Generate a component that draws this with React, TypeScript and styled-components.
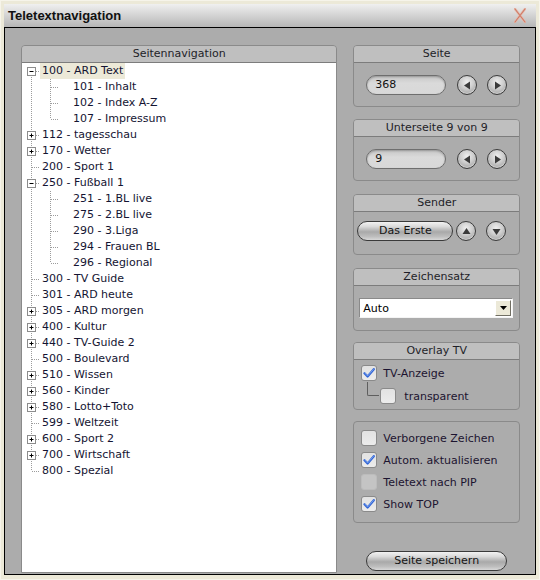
import React from "react";
import styled, { createGlobalStyle } from "styled-components";

type Child = { id: string; name: string };
type Node = { id: string; name: string; state: "open" | "closed" | "leaf"; selected?: boolean; children?: Child[] };

const tree: Node[] = [
  {
    id: "100",
    name: "ARD Text",
    state: "open",
    selected: true,
    children: [
      { id: "101", name: "Inhalt" },
      { id: "102", name: "Index A-Z" },
      { id: "107", name: "Impressum" },
    ],
  },
  { id: "112", name: "tagesschau", state: "closed" },
  { id: "170", name: "Wetter", state: "closed" },
  { id: "200", name: "Sport 1", state: "leaf" },
  {
    id: "250",
    name: "Fußball 1",
    state: "open",
    children: [
      { id: "251", name: "1.BL live" },
      { id: "275", name: "2.BL live" },
      { id: "290", name: "3.Liga" },
      { id: "294", name: "Frauen BL" },
      { id: "296", name: "Regional" },
    ],
  },
  { id: "300", name: "TV Guide", state: "leaf" },
  { id: "301", name: "ARD heute", state: "leaf" },
  { id: "305", name: "ARD morgen", state: "closed" },
  { id: "400", name: "Kultur", state: "closed" },
  { id: "440", name: "TV-Guide 2", state: "closed" },
  { id: "500", name: "Boulevard", state: "leaf" },
  { id: "510", name: "Wissen", state: "closed" },
  { id: "560", name: "Kinder", state: "closed" },
  { id: "580", name: "Lotto+Toto", state: "closed" },
  { id: "599", name: "Weltzeit", state: "leaf" },
  { id: "600", name: "Sport 2", state: "closed" },
  { id: "700", name: "Wirtschaft", state: "closed" },
  { id: "800", name: "Spezial", state: "leaf" },
];

const GlobalStyle = createGlobalStyle`
  body {
    margin: 0;
    font-family: "DejaVu Sans", Verdana, sans-serif;
    font-size: 11px;
  }
`;

const DOT = "#9c9c9c";

function RootConnector({ node, first, last }: { node: Node; first: boolean; last: boolean }) {
  return (
    <svg width="18" height="16" style={{ flexShrink: 0 }}>
      <line x1="9.5" y1={first ? 8 : 0} x2="9.5" y2={last ? 8 : 16} stroke={DOT} strokeDasharray="1 1" />
      <line x1={node.state === "leaf" ? 10 : 14} y1="8.5" x2="18" y2="8.5" stroke={DOT} strokeDasharray="1 1" />
      {node.state !== "leaf" && (
        <g>
          <rect x="5.5" y="4.5" width="8" height="8" fill="#fff" stroke="#8c8c8c" />
          <line x1="7.5" y1="8.5" x2="11.5" y2="8.5" stroke="#000" />
          {node.state === "closed" && <line x1="9.5" y1="6.5" x2="9.5" y2="10.5" stroke="#000" />}
        </g>
      )}
    </svg>
  );
}

function ChildConnector({ last }: { last: boolean }) {
  return (
    <svg width="49" height="16" style={{ flexShrink: 0 }}>
      <line x1="9.5" y1="0" x2="9.5" y2="16" stroke={DOT} strokeDasharray="1 1" />
      <line x1="28.5" y1="0" x2="28.5" y2={last ? 8 : 16} stroke={DOT} strokeDasharray="1 1" />
      <line x1="29" y1="8.5" x2="37" y2="8.5" stroke={DOT} strokeDasharray="1 1" />
    </svg>
  );
}

function CheckMark() {
  return (
    <svg width="12" height="12" viewBox="0 0 12 12">
      <path d="M1.5 6.2 L4.6 9.5 L10.8 2.2" fill="none" stroke="#2f63d6" strokeWidth="2.2" strokeLinecap="round" strokeLinejoin="round" />
      <path d="M1.8 6.0 L4.6 9.0 L10.4 2.4" fill="none" stroke="#8fb4f4" strokeWidth="0.7" strokeLinecap="round" />
    </svg>
  );
}

function Tri({ dir }: { dir: "left" | "right" | "up" | "down" }) {
  const pts = {
    left: "4,7.5 10,3.5 10,11.5",
    right: "11,7.5 5,3.5 5,11.5",
    up: "7.5,4 3.5,10 11.5,10",
    down: "7.5,11 3.5,5 11.5,5",
  }[dir];
  return (
    <svg width="15" height="15" viewBox="0 0 15 15">
      <polygon points={pts} fill="#3b3b3b" />
    </svg>
  );
}

export default function App() {
  return (
    <>
      <GlobalStyle />
      <Window>
        <TitleBar>
          <Title>Teletextnavigation</Title>
          <svg width="12" height="15" viewBox="0 0 12 15">
            <path d="M1 1 L11 14 M11 1 L1 14" stroke="#e6b8aa" strokeWidth="2.4" strokeLinecap="round" />
            <path d="M1 1 L11 14 M11 1 L1 14" stroke="#cd7a66" strokeWidth="1.1" strokeLinecap="round" />
          </svg>
        </TitleBar>
        <Body>
          <TreeGroup>
            <Header>Seitennavigation</Header>
            <TreeArea>
              {tree.map((node, i) => (
                <React.Fragment key={node.id}>
                  <Row>
                    <RootConnector node={node} first={i === 0} last={i === tree.length - 1} />
                    <Label $selected={node.selected}>
                      {node.id} - {node.name}
                    </Label>
                  </Row>
                  {node.children?.map((c, j) => (
                    <Row key={c.id}>
                      <ChildConnector last={j === node.children!.length - 1} />
                      <Label>
                        {c.id} - {c.name}
                      </Label>
                    </Row>
                  ))}
                </React.Fragment>
              ))}
            </TreeArea>
          </TreeGroup>

          <Side>
            <Group $h={62}>
              <Header>Seite</Header>
              <GroupBody $pt={12} $pl={12}>
                <Field>368</Field>
                <RoundBtn>
                  <Tri dir="left" />
                </RoundBtn>
                <RoundBtn>
                  <Tri dir="right" />
                </RoundBtn>
              </GroupBody>
            </Group>

            <Group $h={62} $mt={12}>
              <Header>Unterseite 9 von 9</Header>
              <GroupBody $pt={12} $pl={12}>
                <Field>9</Field>
                <RoundBtn>
                  <Tri dir="left" />
                </RoundBtn>
                <RoundBtn>
                  <Tri dir="right" />
                </RoundBtn>
              </GroupBody>
            </Group>

            <Group $h={61} $mt={13}>
              <Header>Sender</Header>
              <GroupBody $pt={9} $pl={3}>
                <PillButton $w={96}>Das Erste</PillButton>
                <RoundBtn $gap={3}>
                  <Tri dir="up" />
                </RoundBtn>
                <RoundBtn>
                  <Tri dir="down" />
                </RoundBtn>
              </GroupBody>
            </Group>

            <Group $h={63} $mt={13}>
              <Header>Zeichensatz</Header>
              <GroupBody $pt={12} $pl={5}>
                <Select>
                  <SelectText>Auto</SelectText>
                  <SelectArrow>
                    <svg width="7" height="4" viewBox="0 0 7 4">
                      <polygon points="0,0 7,0 3.5,4" fill="#000" />
                    </svg>
                  </SelectArrow>
                </Select>
              </GroupBody>
            </Group>

            <Group $h={68} $mt={11}>
              <Header>Overlay TV</Header>
              <CheckList $pt={5} $gap={7}>
                <CheckRow>
                  <Box>
                    <CheckMark />
                  </Box>
                  <CheckLabel>TV-Anzeige</CheckLabel>
                </CheckRow>
                <CheckRow $indent>
                  <Elbow />
                  <Box />
                  <CheckLabel $wide>transparent</CheckLabel>
                </CheckRow>
              </CheckList>
            </Group>

            <Group $h={102} $mt={11}>
              <CheckList $pt={8} $gap={6}>
                <CheckRow>
                  <Box />
                  <CheckLabel>Verborgene Zeichen</CheckLabel>
                </CheckRow>
                <CheckRow>
                  <Box>
                    <CheckMark />
                  </Box>
                  <CheckLabel>Autom. aktualisieren</CheckLabel>
                </CheckRow>
                <CheckRow>
                  <Box $disabled />
                  <CheckLabel>Teletext nach PIP</CheckLabel>
                </CheckRow>
                <CheckRow>
                  <Box>
                    <CheckMark />
                  </Box>
                  <CheckLabel>Show TOP</CheckLabel>
                </CheckRow>
              </CheckList>
            </Group>

            <SaveRow>
              <PillButton $w={141}>Seite speichern</PillButton>
            </SaveRow>
          </Side>
        </Body>
      </Window>
    </>
  );
}

const Window = styled.div`
  width: 540px;
  height: 580px;
  box-sizing: border-box;
  background: #ece9d8;
  border: 1px solid #f6f4ea;
  padding: 3px 3px 4px 3px;
  display: flex;
  flex-direction: column;
`;

const TitleBar = styled.div`
  height: 23px;
  flex-shrink: 0;
  display: flex;
  align-items: center;
  justify-content: space-between;
  padding: 0 10px 0 4px;
  background: linear-gradient(#f0f0f0, #d6d6d6 45%, #b6b6b6);
`;

const Title = styled.div`
  font-family: "Liberation Sans", Arial, sans-serif;
  font-weight: bold;
  font-size: 13px;
  color: #111;
`;

const Body = styled.div`
  flex: 1;
  display: flex;
  gap: 16px;
  border: 1px solid #000;
  background: #acacac;
  padding: 17px 15px 1px 16px;
`;

const TreeGroup = styled.div`
  width: 317px;
  display: flex;
  flex-direction: column;
  border: 1px solid #8a8a8a;
  border-top-left-radius: 4px;
  border-top-right-radius: 4px;
  box-sizing: border-box;
`;

const Header = styled.div`
  height: 17px;
  flex-shrink: 0;
  box-sizing: border-box;
  background: #bfbfbf;
  border-bottom: 1px solid #7c7c7c;
  border-top-left-radius: 3px;
  border-top-right-radius: 3px;
  text-align: center;
  line-height: 16px;
  color: #1e1e28;
`;

const TreeArea = styled.div`
  flex: 1;
  background: #fff;
`;

const Row = styled.div`
  height: 16px;
  display: flex;
  align-items: center;
`;

const Label = styled.span<{ $selected?: boolean }>`
  padding: 0 2px;
  height: 16px;
  line-height: 16px;
  white-space: nowrap;
  color: #141432;
  background: ${(p) => (p.$selected ? "#ece9d8" : "transparent")};
`;

const Side = styled.div`
  width: 167px;
  display: flex;
  flex-direction: column;
`;

const Group = styled.div<{ $h: number; $mt?: number }>`
  height: ${(p) => p.$h}px;
  margin-top: ${(p) => p.$mt ?? 0}px;
  box-sizing: border-box;
  border: 1px solid #8a8a8a;
  border-radius: 4px;
  display: flex;
  flex-direction: column;
`;

const GroupBody = styled.div<{ $pt: number; $pl: number }>`
  display: flex;
  align-items: center;
  padding: ${(p) => p.$pt}px 0 0 ${(p) => p.$pl}px;
`;

const Field = styled.div`
  width: 80px;
  height: 20px;
  box-sizing: border-box;
  border: 1px solid #6e6e6e;
  border-radius: 10px;
  background: linear-gradient(#c6c6c6, #dadada 40%, #d8d8d8);
  box-shadow: inset 0 1px 2px rgba(0, 0, 0, 0.25);
  padding-left: 8px;
  line-height: 18px;
  color: #111;
  margin-right: 11px;
`;

const RoundBtn = styled.div<{ $gap?: number }>`
  width: 20px;
  height: 20px;
  box-sizing: border-box;
  border-radius: 50%;
  border: 1px solid #3c3c3c;
  background: radial-gradient(circle at 50% 35%, #f0f0f0 0%, #cdcdcd 45%, #8e8e8e 100%);
  box-shadow: inset 0 -1px 1px rgba(255, 255, 255, 0.5);
  display: flex;
  align-items: center;
  justify-content: center;
  margin-left: ${(p) => p.$gap ?? 0}px;
  & + & {
    margin-left: 10px;
  }
`;

const PillButton = styled.div<{ $w: number }>`
  width: ${(p) => p.$w}px;
  height: 20px;
  box-sizing: border-box;
  border: 1px solid #3a3a3a;
  border-radius: 10px;
  background: linear-gradient(#f2f2f2 0%, #dadada 25%, #a9a9a9 55%, #bdbdbd 80%, #d8d8d8 100%);
  text-align: center;
  line-height: 18px;
  color: #141414;
`;

const Select = styled.div`
  width: 154px;
  height: 20px;
  box-sizing: border-box;
  background: #fff;
  border: 1px solid;
  border-color: #8a8a8a #f4f4f4 #f4f4f4 #8a8a8a;
  display: flex;
  align-items: center;
  padding: 1px;
`;

const SelectText = styled.div`
  flex: 1;
  padding-left: 2px;
  color: #000;
`;

const SelectArrow = styled.div`
  width: 16px;
  height: 16px;
  box-sizing: border-box;
  background: #ece9d8;
  border: 1px solid;
  border-color: #fff #716f64 #716f64 #fff;
  display: flex;
  align-items: center;
  justify-content: center;
`;

const CheckList = styled.div<{ $pt: number; $gap: number }>`
  display: flex;
  flex-direction: column;
  gap: ${(p) => p.$gap}px;
  padding: ${(p) => p.$pt}px 0 0 7px;
`;

const CheckRow = styled.div<{ $indent?: boolean }>`
  display: flex;
  align-items: center;
  height: 16px;
  padding-left: ${(p) => (p.$indent ? 6 : 0)}px;
`;

const Elbow = styled.div`
  width: 12px;
  height: 14px;
  flex-shrink: 0;
  align-self: flex-start;
  margin-top: -6px;
  border-left: 1px solid #5e5e5e;
  border-bottom: 1px solid #5e5e5e;
  border-bottom-left-radius: 2px;
  box-sizing: border-box;
  margin-right: 1px;
`;

const Box = styled.div<{ $disabled?: boolean }>`
  width: 16px;
  height: 16px;
  box-sizing: border-box;
  border: 1px solid ${(p) => (p.$disabled ? "#bcbcbc" : "#8a8a8a")};
  border-radius: 3px;
  background: ${(p) => (p.$disabled ? "#c4c4c4" : "linear-gradient(#e2e2e2, #ececec)")};
  display: flex;
  align-items: center;
  justify-content: center;
  flex-shrink: 0;
`;

const CheckLabel = styled.span<{ $wide?: boolean }>`
  margin-left: ${(p) => (p.$wide ? 8 : 6)}px;
  color: #1c1430;
  white-space: nowrap;
`;

const SaveRow = styled.div`
  margin-top: 28px;
  display: flex;
  justify-content: center;
`;
